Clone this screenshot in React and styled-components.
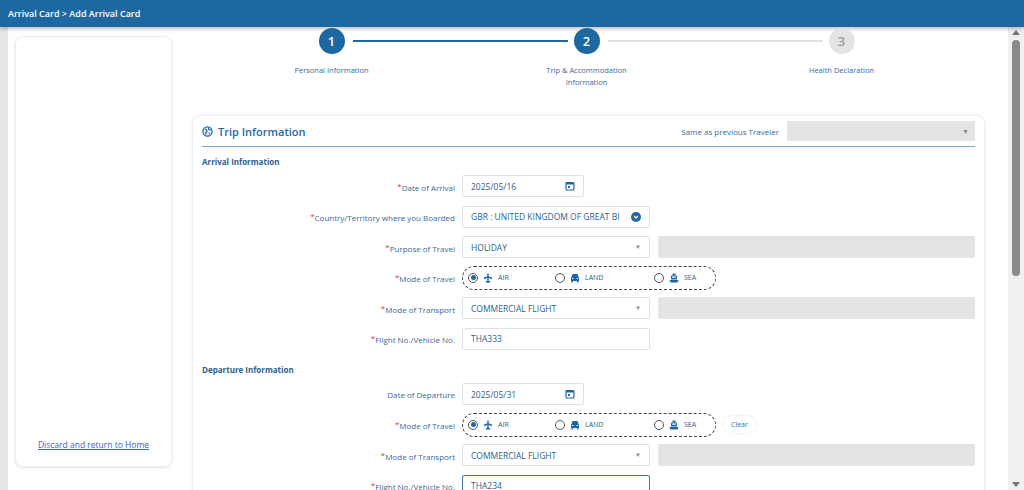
import React from "react";
import styled, { createGlobalStyle } from "styled-components";

const G = createGlobalStyle`
  html,body{margin:0;padding:0;height:490px;overflow:hidden;background:#fff;}
  body{font-family:"Open Sans","Noto Sans",sans-serif;color:#2b5f8e;}
  *{box-sizing:border-box;}
`;
const Page = styled.div`display:flex;flex-direction:column;height:490px;`;
const Header = styled.div`height:27px;background:#1e68a2;color:#fff;font-size:9px;font-weight:600;display:flex;align-items:center;padding-left:8px;box-shadow:0 2px 4px rgba(0,0,0,.25);z-index:1;`;
const Body = styled.div`flex:1;display:flex;min-height:0;background:#fff;`;
const Edge = styled.div`width:8px;background:#e6e6e6;`;
const Main = styled.div`flex:1;display:flex;gap:20px;padding:9px 23px 0 7px;overflow:hidden;min-width:0;`;
const Side = styled.div`width:157px;height:431px;border:1px solid #eceff2;border-radius:8px;box-shadow:0 1px 3px rgba(0,0,0,.12);display:flex;align-items:flex-end;justify-content:center;padding-bottom:16px;flex-shrink:0;`;
const Link = styled.a`font-size:8.5px;color:#3b63b8;text-decoration:underline;`;
const Content = styled.div`flex:1;min-width:0;display:flex;flex-direction:column;margin-top:-9px;`;
const Steps = styled.div`display:grid;grid-template-columns:repeat(3,255px);margin-left:12px;height:75px;flex-shrink:0;`;
const Step = styled.div`position:relative;display:flex;flex-direction:column;align-items:center;padding-top:1px;`;
const Circle = styled.div`width:26px;height:26px;border-radius:50%;background:${p=>p.on?"#1e68a2":"#e4e4e4"};color:${p=>p.on?"#fff":"#999"};font-size:13px;font-weight:600;display:flex;align-items:center;justify-content:center;z-index:1;`;
const Line = styled.div`position:absolute;top:13px;left:calc(50% + 21px);width:215px;height:2px;background:${p=>p.on?"#1e68a2":"#e2e2e2"};`;
const StepLabel = styled.div`font-size:7.5px;color:#3a6a96;text-align:center;margin-top:10px;line-height:12px;width:130px;`;
const Card = styled.div`border:1px solid #eef0f2;border-radius:8px 8px 0 0;box-shadow:0 0 3px rgba(0,0,0,.08);padding:0 9px;flex:1;margin-top:13px;`;
const CardHead = styled.div`display:flex;align-items:center;height:31px;border-bottom:1px solid #7aa4c8;`;
const Title = styled.div`display:flex;align-items:center;gap:5px;font-size:11px;font-weight:600;color:#1e68a2;flex:1;`;
const Prev = styled.span`font-size:8px;color:#3a6a96;margin-right:8px;`;
const GraySel = styled.div`width:188px;height:20px;background:#e4e4e4;display:flex;justify-content:flex-end;align-items:center;padding-right:6px;font-size:7px;color:#888;`;
const Section = styled.div`font-size:8px;font-weight:700;color:#2b5f8e;margin:${p=>p.first?"9px":"10px"} 0 4px;`;
const Row = styled.div`display:grid;grid-template-columns:253px auto 1fr;column-gap:7px;align-items:center;height:30.5px;`;
const Label = styled.div`text-align:right;font-size:8px;color:#3a6a96;`;
const Req = styled.span`color:#e0303a;font-size:8px;vertical-align:2px;`;
const Input = styled.div`height:22px;width:${p=>p.w}px;border:1px solid ${p=>p.focus?"#4a6fb3":"#dde2e7"};border-radius:2px;display:flex;align-items:center;justify-content:space-between;padding:0 8px;font-size:8.5px;color:#2b5f8e;white-space:nowrap;overflow:hidden;`;
const Extra = styled.div`height:22px;background:#e4e4e4;border-radius:2px;margin-left:1px;`;
const Radios = styled.div`width:254px;height:24px;border:1px dashed #444;border-radius:12px;display:flex;align-items:center;padding-left:5px;font-size:7px;`;
const Opt = styled.div`display:flex;align-items:center;gap:5px;width:${p=>p.w}px;`;
const Dot = styled.span`width:10px;height:10px;border-radius:50%;border:1px solid #555;display:flex;align-items:center;justify-content:center;&::after{content:"";width:5px;height:5px;border-radius:50%;background:${p=>p.on?"#1e68a2":"transparent"};}`;
const ClearBtn = styled.div`font-size:7px;color:#3a6a96;padding:4px 8px;border-radius:10px;box-shadow:0 0 3px rgba(0,0,0,.12);justify-self:start;`;
const Caret = styled.span`font-size:6px;color:#888;`;
const Scroll = styled.div`width:16px;background:#f1f1f1;display:flex;flex-direction:column;align-items:center;padding:3px 0;`;
const Thumb = styled.div`width:8px;height:236px;border-radius:4px;background:#8a8a8a;margin:5px 0 auto;`;
const Arrow = styled.div`width:0;height:0;border-left:4px solid transparent;border-right:4px solid transparent;${p=>p.up?"border-bottom:5px solid #777;":"border-top:5px solid #777;"}`;

const Cal = () => (<svg width="10" height="10" viewBox="0 0 10 10"><rect x="1" y="1.5" width="8" height="7.5" rx="1" fill="none" stroke="#1e68a2" strokeWidth="1.2"/><rect x="1" y="1.5" width="8" height="2" fill="#1e68a2"/><rect x="3" y="5" width="2" height="2" fill="#1e68a2"/></svg>);
const Globe = () => (<svg width="11" height="11" viewBox="0 0 12 12"><circle cx="6" cy="6" r="5" fill="none" stroke="#1e68a2" strokeWidth="1.4"/><path d="M3 3.5l2 .5 .5 2-1.5 1 .5 2.5M7 2l.5 2 2 .5M8.5 7l-1 2" stroke="#1e68a2" strokeWidth="1.4" fill="none"/></svg>);
const Plane = () => (<svg width="10" height="10" viewBox="0 0 10 10"><path d="M5 .5v9M1 5.5l4-2 4 2M3 9l2-1 2 1" stroke="#1e68a2" strokeWidth="1.4" fill="none"/></svg>);
const Car = () => (<svg width="10" height="10" viewBox="0 0 10 10"><path d="M1.5 4l1-3h5l1 3z" fill="#1e68a2"/><rect x="1" y="4" width="8" height="4" rx=".6" fill="#1e68a2"/><rect x="2" y="5" width="1.3" height="1" fill="#fff"/><rect x="6.7" y="5" width="1.3" height="1" fill="#fff"/><rect x="1.5" y="8" width="1.5" height="1.5" fill="#1e68a2"/><rect x="7" y="8" width="1.5" height="1.5" fill="#1e68a2"/></svg>);
const Ship = () => (<svg width="10" height="10" viewBox="0 0 10 10"><rect x="3.5" y=".5" width="3" height="2" fill="#1e68a2"/><rect x="2" y="2.5" width="6" height="4" rx=".5" fill="#1e68a2"/><rect x="3" y="3.5" width="4" height="1.2" fill="#fff"/><path d="M.5 7h9l-1 2.5h-7z" fill="#1e68a2"/></svg>);
const ChevBtn = () => (<svg width="10" height="10" viewBox="0 0 10 10"><circle cx="5" cy="5" r="5" fill="#1e68a2"/><path d="M3 4l2 2 2-2" stroke="#fff" strokeWidth="1.3" fill="none"/></svg>);

const Mode = ({clear}) => (
  <>
    <Radios>
      <Opt w={87}><Dot on/><Plane/>AIR</Opt>
      <Opt w={99}><Dot/><Car/>LAND</Opt>
      <Opt w={55}><Dot/><Ship/>SEA</Opt>
    </Radios>
    {clear ? <ClearBtn>Clear</ClearBtn> : <span/>}
  </>
);
const L = ({children, req}) => <Label>{req && <Req>*</Req>}{children}</Label>;

export default function App(){
  return (<Page><G/>
    <Header>Arrival Card &gt; Add Arrival Card</Header>
    <Body><Edge/>
      <Main>
        <Side><Link>Discard and return to Home</Link></Side>
        <Content>
          <Steps>
            <Step><Circle on>1</Circle><Line on/><StepLabel>Personal Information</StepLabel></Step>
            <Step><Circle on>2</Circle><Line/><StepLabel>Trip &amp; Accommodation<br/>Information</StepLabel></Step>
            <Step><Circle>3</Circle><StepLabel>Health Declaration</StepLabel></Step>
          </Steps>
          <Card>
            <CardHead><Title><Globe/>Trip Information</Title><Prev>Same as previous Traveler</Prev><GraySel>▼</GraySel></CardHead>
            <Section first>Arrival Information</Section>
            <Row><L req>Date of Arrival</L><Input w={122}>2025/05/16<Cal/></Input><span/></Row>
            <Row><L req>Country/Territory where you Boarded</L><Input w={188}>GBR : UNITED KINGDOM OF GREAT BI<ChevBtn/></Input><span/></Row>
            <Row><L req>Purpose of Travel</L><Input w={188}>HOLIDAY<Caret>▼</Caret></Input><Extra/></Row>
            <Row><L req>Mode of Travel</L><Mode/></Row>
            <Row><L req>Mode of Transport</L><Input w={188}>COMMERCIAL FLIGHT<Caret>▼</Caret></Input><Extra/></Row>
            <Row><L req>Flight No./Vehicle No.</L><Input w={188}>THA333</Input><span/></Row>
            <Section>Departure Information</Section>
            <Row><L>Date of Departure</L><Input w={122}>2025/05/31<Cal/></Input><span/></Row>
            <Row><L req>Mode of Travel</L><Mode clear/></Row>
            <Row><L req>Mode of Transport</L><Input w={188}>COMMERCIAL FLIGHT<Caret>▼</Caret></Input><Extra/></Row>
            <Row><L req>Flight No./Vehicle No.</L><Input w={188} focus>THA234</Input><span/></Row>
            <Title style={{marginTop:8}}>Accommodation Information</Title>
          </Card>
        </Content>
      </Main>
      <Scroll><Arrow up/><Thumb/><Arrow/></Scroll>
    </Body>
  </Page>);
}
